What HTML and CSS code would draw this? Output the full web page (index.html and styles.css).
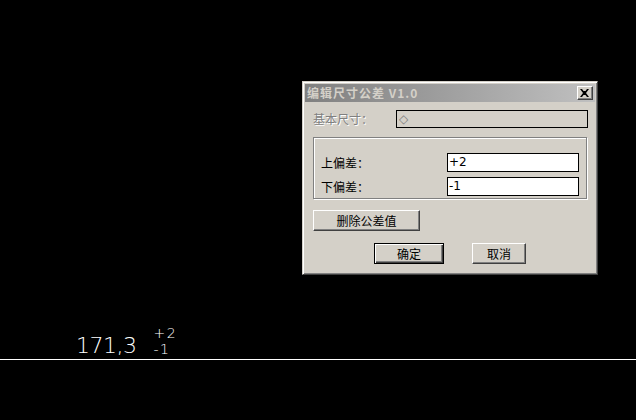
FILE: index.html
```html
<!DOCTYPE html>
<html>
<head>
<meta charset="utf-8">
<link rel="stylesheet" href="styles.css">
</head>
<body>
<div class="canvas">
  <div class="dim">
    <span class="dim-main">171,3</span>
    <span class="dim-tol">
      <span class="tol-up">+2</span>
      <span class="tol-down">-1</span>
    </span>
  </div>
  <div class="baseline"></div>

  <div class="dialog">
    <div class="titlebar">
      <span class="title">编辑尺寸公差 V1.0</span>
      <span class="close-btn">
        <svg width="9" height="8" viewBox="0 0 9 8"><path d="M0 0h2l1.5 2h2L7 0h2L6 4l3 4H7L5.5 6h-2L2 8H0l3-4z" fill="#000"/></svg>
      </span>
    </div>
    <div class="body">
      <div class="row-basic">
        <span class="label disabled">基本尺寸：</span>
        <span class="basic-box"><span class="diamond">◇</span></span>
      </div>
      <div class="group">
        <div class="row-tol">
          <span class="label">上偏差：</span>
          <span class="field">+2</span>
        </div>
        <div class="row-tol">
          <span class="label">下偏差：</span>
          <span class="field">-1</span>
        </div>
      </div>
      <div class="row-del">
        <span class="btn btn-del">删除公差值</span>
      </div>
      <div class="row-actions">
        <span class="btn btn-ok default">确定</span>
        <span class="btn btn-cancel">取消</span>
      </div>
    </div>
  </div>
</div>
</body>
</html>
```
FILE: styles.css
```css
html, body {
  margin: 0;
  padding: 0;
  background: #000;
}
.canvas {
  position: relative;
  width: 636px;
  height: 420px;
  overflow: hidden;
  background: #000;
}
.dim {
  position: absolute;
  left: 76px;
  top: 325px;
  display: flex;
  align-items: flex-end;
  color: #fff;
  font-family: "DejaVu Sans", sans-serif;
  font-weight: 200;
}
.dim-main {
  font-size: 22px;
  line-height: 22px;
  letter-spacing: -0.5px;
}
.dim-tol {
  display: flex;
  flex-direction: column;
  margin-left: 17px;
  font-size: 14px;
  line-height: 16px;
  letter-spacing: 1.5px;
}
.tol-up, .tol-down {
  height: 16px;
}
.baseline {
  position: absolute;
  left: 0;
  top: 359px;
  width: 636px;
  height: 1px;
  background: #fff;
}

.dialog {
  position: absolute;
  left: 302px;
  top: 81px;
  width: 292px;
  height: 190px;
  background: #d4d0c8;
  border-style: solid;
  border-width: 1px;
  border-color: #d4d0c8 #404040 #404040 #d4d0c8;
  box-shadow: inset 1px 1px 0 #fff, inset -1px -1px 0 #808080;
  padding: 1px;
  font-family: "Noto Sans CJK SC", "Liberation Sans", sans-serif;
  font-size: 12px;
  color: #000;
}
.titlebar {
  margin: 1px;
  height: 18px;
  background: linear-gradient(to right, #808080, #c0c0c0);
  display: flex;
  align-items: center;
  justify-content: space-between;
  padding: 0 2px 0 2px;
}
.title {
  color: #d4d0c8;
  font-weight: bold;
  font-size: 12px;
  line-height: 18px;
  letter-spacing: 1px;
}
.close-btn {
  width: 16px;
  height: 14px;
  box-sizing: border-box;
  background: #d4d0c8;
  border-style: solid;
  border-width: 1px;
  border-color: #fff #404040 #404040 #fff;
  box-shadow: inset -1px -1px 0 #808080;
  display: flex;
  align-items: center;
  justify-content: center;
  padding-right: 1px;
}
.body {
  padding: 7px 8px 0 9px;
}
.row-basic {
  display: flex;
  align-items: center;
  height: 18px;
}
.label {
  line-height: 18px;
}
.disabled {
  color: #808080;
  text-shadow: 1px 1px 0 #fff;
}
.row-basic .label {
  width: 83px;
}
.basic-box {
  width: 192px;
  height: 18px;
  box-sizing: border-box;
  border: 1px solid #000;
  background: #d4d0c8;
  display: flex;
  align-items: center;
  padding-left: 2px;
}
.diamond {
  color: #808080;
  font-family: "DejaVu Sans", sans-serif;
  font-size: 12px;
  line-height: 14px;
}
.group {
  margin-top: 9px;
  width: 274px;
  height: 62px;
  box-sizing: border-box;
  border: 1px solid #808080;
  box-shadow: 1px 1px 0 #fff, inset 1px 1px 0 #fff;
  padding: 15px 0 0 7px;
  display: flex;
  flex-direction: column;
  gap: 5px;
}
.row-tol {
  display: flex;
  align-items: center;
  height: 19px;
}
.row-tol .label {
  width: 126px;
}
.field {
  width: 132px;
  height: 19px;
  box-sizing: border-box;
  border: 1px solid #000;
  background: #fff;
  font-family: "DejaVu Sans", sans-serif;
  font-size: 12px;
  line-height: 17px;
  padding-left: 1px;
}
.row-del {
  margin-top: 11px;
  height: 21px;
}
.btn {
  display: inline-flex;
  align-items: center;
  justify-content: center;
  box-sizing: border-box;
  height: 21px;
  background: #d4d0c8;
  border-style: solid;
  border-width: 1px;
  border-color: #fff #404040 #404040 #fff;
  box-shadow: inset -1px -1px 0 #808080;
  line-height: 18px;
}
.btn-del {
  width: 107px;
}
.row-actions {
  margin-top: 12px;
  display: flex;
  padding-left: 61px;
  gap: 28px;
}
.btn-ok {
  width: 70px;
}
.btn.default {
  border: 1px solid #000;
  box-shadow: inset 1px 1px 0 #fff, inset -1px -1px 0 #404040, inset -2px -2px 0 #808080;
}
.btn-cancel {
  width: 54px;
}
```
